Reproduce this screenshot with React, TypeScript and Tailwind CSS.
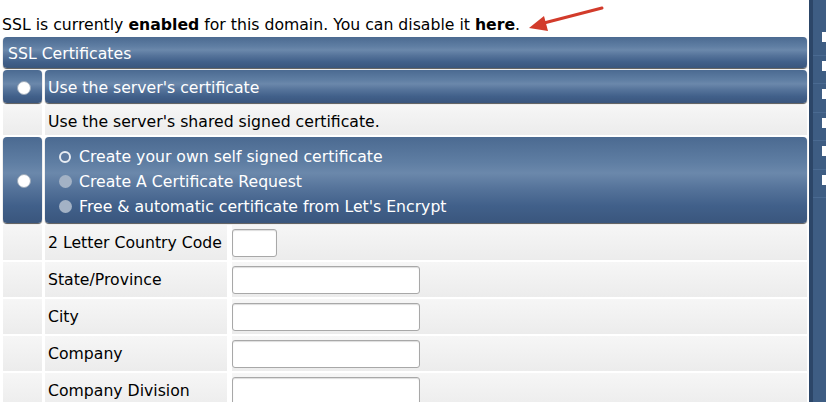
import React from "react";

const bar =
  "bg-[linear-gradient(to_bottom,#4b6a91_0%,#5f7ea3_30%,#6b88ab_42%,#55739a_60%,#41608a_80%,#3a567d_100%)] shadow-[0_1px_1px_#555]";
const light = "bg-[linear-gradient(to_bottom,#f6f6f6,#ececec)]";

const fields = [
  { label: "2 Letter Country Code", w: "w-[45px]" },
  { label: "State/Province", w: "w-[188px]" },
  { label: "City", w: "w-[188px]" },
  { label: "Company", w: "w-[188px]" },
  { label: "Company Division", w: "w-[188px]" },
];

function Dot({ kind }: { kind: "white" | "ring" | "dim" }) {
  if (kind === "white")
    return <span className="block h-[14px] w-[14px] rounded-full border border-[#9aa8b8] bg-white" />;
  if (kind === "ring")
    return <span className="block h-[12px] w-[12px] rounded-full border-[2px] border-[#e8edf3] bg-[#5d7aa0]" />;
  return <span className="block h-[13px] w-[13px] rounded-full bg-[#a3b2c5]" />;
}

export default function App() {
  return (
    <div
      className="flex h-[402px] w-[826px] overflow-hidden bg-white text-[15.7px] text-black"
      style={{ fontFamily: '"DejaVu Sans", Verdana, sans-serif' }}
    >
      <div className="relative w-[809px] shrink-0 pl-[3px] pr-[2px]">
        <p className="-ml-[1px] flex h-[37px] items-end pb-[4px] leading-none">
          <span>
            SSL is currently <b>enabled</b> for this domain. You can disable it <b>here</b>.
          </span>
        </p>
        <svg className="absolute left-[526px] top-[4px]" width="80" height="30" viewBox="0 0 80 30">
          <line x1="76" y1="4" x2="14" y2="20" stroke="#d23b2b" strokeWidth="3" strokeLinecap="round" />
          <polygon points="3,24 18,12 22,27" fill="#d23b2b" />
        </svg>

        <div className="flex flex-col gap-[2px]">
          <div className={`flex h-[31px] items-center rounded-[4px] pl-[5px] pt-[2px] text-white ${bar}`}>
            SSL Certificates
          </div>

          <div className="flex h-[33px] gap-[3px]">
            <div className={`flex w-[39px] items-center justify-center rounded-[4px] pl-[3px] pt-[2px] ${bar}`}>
              <Dot kind="white" />
            </div>
            <div className={`flex flex-1 items-center rounded-[4px] pl-[3px] pt-[3px] text-white ${bar}`}>
              Use the server's certificate
            </div>
          </div>

          <div className="flex h-[30px] gap-[3px]">
            <div className={`w-[39px] ${light}`} />
            <div className={`flex flex-1 items-center pl-[3px] pt-[3px] ${light}`}>
              Use the server's shared signed certificate.
            </div>
          </div>

          <div className="flex h-[86px] gap-[3px]">
            <div className={`flex w-[39px] items-center justify-center rounded-[4px] pl-[3px] pt-[2px] ${bar}`}>
              <Dot kind="white" />
            </div>
            <div className={`flex flex-1 flex-col justify-center gap-[6px] rounded-[4px] pl-[14px] pt-[3px] text-white ${bar}`}>
              <div className="flex items-center gap-[8px] leading-[19px]">
                <Dot kind="ring" /> Create your own self signed certificate
              </div>
              <div className="flex items-center gap-[7px] leading-[19px]">
                <Dot kind="dim" /> Create A Certificate Request
              </div>
              <div className="flex items-center gap-[7px] leading-[19px]">
                <Dot kind="dim" /> Free &amp; automatic certificate from Let's Encrypt
              </div>
            </div>
          </div>

          {fields.map((f) => (
            <div key={f.label} className="flex h-[35px] shrink-0 gap-[3px]">
              <div className={`w-[39px] ${light}`} />
              <div className={`flex w-[182px] items-center pl-[3px] ${light}`}>{f.label}</div>
              <div className={`flex flex-1 items-center border-l-2 border-white ${light}`}>
                <input
                  className={`h-[28px] ${f.w} rounded-[3px] border border-[#a8a8a8] bg-white shadow-[inset_0_1px_1px_#ddd]`}
                />
              </div>
            </div>
          ))}
        </div>
      </div>

      <div className="flex w-[17px] shrink-0 border-l-[4px] border-[#2c4668] bg-[#3e5d83]">
        <div className="flex w-full flex-col pt-[27px]">
          {[0, 1, 2, 3, 4, 5].map((i) => (
            <div key={i} className="flex h-[28.5px] shrink-0 justify-end border-b border-[#4a6a91]">
              <span className="mt-[5px] block h-[10px] w-[4px] bg-white" />
            </div>
          ))}
        </div>
      </div>
    </div>
  );
}
